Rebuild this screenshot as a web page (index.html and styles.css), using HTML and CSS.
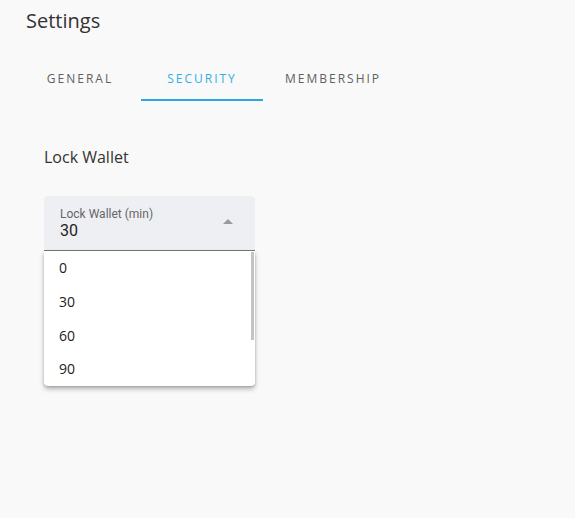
FILE: index.html
```html
<!DOCTYPE html>
<html>
<head>
<meta charset="utf-8">
<link rel="stylesheet" href="styles.css">
</head>
<body>
<div class="page">
  <h1 class="title">Settings</h1>
  <nav class="tabs">
    <div class="tab">GENERAL</div>
    <div class="tab active">SECURITY</div>
    <div class="tab">MEMBERSHIP</div>
  </nav>
  <section class="content">
    <h2 class="heading">Lock Wallet</h2>
    <div class="select-wrap">
      <div class="select">
        <div class="select-text">
          <div class="select-label">Lock Wallet (min)</div>
          <div class="select-value">30</div>
        </div>
        <span class="arrow"></span>
      </div>
      <ul class="menu">
        <li class="option">0</li>
        <li class="option">30</li>
        <li class="option">60</li>
        <li class="option">90</li>
        <span class="scrollbar"></span>
      </ul>
    </div>
  </section>
</div>
</body>
</html>
```
FILE: styles.css
```css
html, body {
  margin: 0;
  padding: 0;
  background: #f9f9f9;
  height: 100%;
}
body {
  font-family: "Open Sans", "Noto Sans", sans-serif;
  color: #333;
}
.page {
  padding: 7px 0 0 25px;
}
.title {
  margin: 0 0 0 1px;
  font-size: 20px;
  font-weight: 400;
  line-height: 28px;
  color: #333;
}
.tabs {
  display: flex;
  margin: 18px 0 0 -6px;
}
.tab {
  min-width: 122px;
  box-sizing: border-box;
  height: 48px;
  padding: 4px 22px 0;
  display: flex;
  align-items: center;
  justify-content: center;
  font-size: 12px;
  font-weight: 500;
  letter-spacing: 2px;
  color: #5f5f5f;
  border-bottom: 2px solid transparent;
}
.tab.active {
  color: #33aee3;
  border-bottom-color: #2aa8e2;
}
.content {
  padding-left: 19px;
}
.heading {
  margin: 42px 0 0 0;
  font-size: 16px;
  font-weight: 400;
  line-height: 28px;
  color: #333;
}
.select-wrap {
  position: relative;
  width: 211px;
  margin-top: 25px;
}
.select {
  height: 54px;
  background: #eeeff3;
  border-radius: 4px 4px 0 0;
  border-bottom: 1px solid #777;
  display: flex;
  align-items: center;
  padding: 0 22px 0 16px;
  font-family: Roboto, "Liberation Sans", sans-serif;
}
.select-text {
  flex: 1;
  padding-top: 2px;
}
.select-label {
  font-size: 12px;
  line-height: 14px;
  color: #666;
}
.select-value {
  font-size: 16px;
  line-height: 20px;
  color: #222;
}
.arrow {
  width: 0;
  height: 0;
  border-left: 5px solid transparent;
  border-right: 5px solid transparent;
  border-bottom: 5px solid #9a9a9e;
  margin-top: -3px;
}
.menu {
  position: absolute;
  top: 55px;
  left: 0;
  width: 211px;
  margin: 0;
  padding: 0;
  list-style: none;
  background: #fff;
  border-radius: 0 0 4px 4px;
  box-shadow: 0 3px 5px rgba(0,0,0,0.28), 0 1px 2px rgba(0,0,0,0.15);
  overflow: hidden;
}
.option {
  height: 34px;
  box-sizing: border-box;
  padding: 0 0 2px 15px;
  display: flex;
  align-items: center;
  font-size: 14px;
  color: #222;
}
.option:last-of-type {
  height: 33px;
}
.scrollbar {
  position: absolute;
  right: 1px;
  top: 1px;
  width: 3px;
  height: 88px;
  background: #c4c4c4;
}
```
